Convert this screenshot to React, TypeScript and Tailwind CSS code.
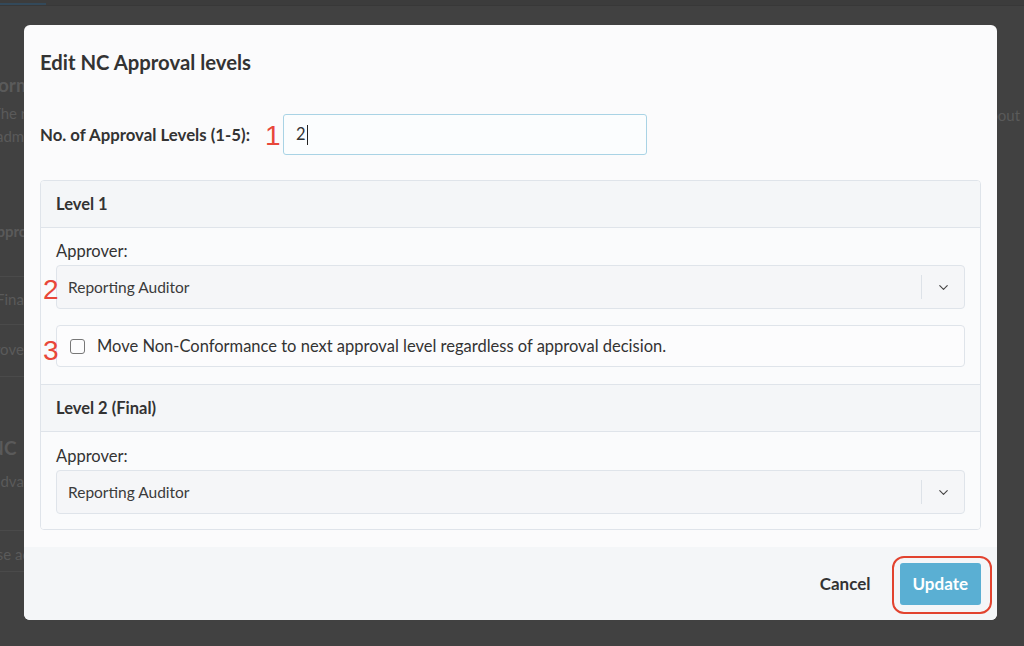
import { ChevronDown } from "lucide-react"

function ApproverSelect({ value }: { value: string }) {
  return (
    <div className="flex h-[44px] items-center rounded-[4px] border border-[#dfe4ea] bg-[#f5f6f8]">
      <span className="flex-1 pl-[11px] pt-[2px] text-[15.5px] text-[#3b3b3b]">{value}</span>
      <span className="h-[24px] w-px bg-[#dde2e8]" />
      <span className="flex w-[42px] justify-center text-[#444]">
        <ChevronDown className="h-[15px] w-[15px]" strokeWidth={1.8} />
      </span>
    </div>
  )
}

function Mark({ n, className = "" }: { n: string; className?: string }) {
  return (
    <span
      className={`font-['Liberation_Sans',sans-serif] text-[28px] leading-none text-[#e8473a] ${className}`}
    >
      {n}
    </span>
  )
}

export default function App() {
  return (
    <div className="relative min-h-screen overflow-hidden bg-[#414141] font-['Lato',sans-serif] text-[#5a5a5a]">
      {/* Page behind the dialog */}
      <div className="relative h-[6px] border-b border-[#383838] bg-[#3c3c3c]">
        <div className="absolute bottom-0 left-0 h-[2px] w-[46px] bg-[#33495a]" />
      </div>
      <div className="flex">
        <div className="w-[300px]">
          <div className="ml-[-12px] mt-[66px] text-[19px] font-bold leading-[26px]">Form</div>
          <div className="ml-[-8px] mt-[4px] text-[15px] leading-[23px]">The r</div>
          <div className="ml-[-4px] text-[15px] leading-[23px]">admin</div>
          <div className="ml-[-14px] mt-[72px] text-[15px] font-bold leading-[22px]">Approval</div>
          <div className="mt-[34px] border-t border-[#4a4a4a]" />
          <div className="ml-[-4px] mt-[11px] text-[15px] leading-[22px]">Final</div>
          <div className="mt-[14px] border-t border-[#4a4a4a]" />
          <div className="ml-[-32px] mt-[13px] text-[15px] leading-[22px]">Approver; Re</div>
          <div className="mt-[16px] border-t border-[#4a4a4a]" />
          <div className="ml-[-56px] mt-[58px] text-[19px] font-bold leading-[26px]">Final NC</div>
          <div className="ml-[-7px] mt-[9px] text-[15px] leading-[22px]">advanced</div>
          <div className="mt-[38px] border-t border-[#4a4a4a]" />
          <div className="ml-[-14px] mt-[12px] text-[15px] leading-[22px]">Use ad</div>
          <div className="mt-[6px] border-t border-[#4a4a4a]" />
        </div>
        <div className="flex-1">
          <div className="ml-[682px] mt-[98px] text-[15px] leading-[23px]">about c</div>
        </div>
      </div>

      {/* Dialog */}
      <div className="absolute inset-0 pl-[24px] pt-[25px]">
        <div className="w-[973px] overflow-hidden rounded-[6px] bg-[#fbfbfc] text-[#333]">
          <div className="px-[16px] pb-[17px]">
            <h2 className="pt-[24px] text-[20.3px] font-bold leading-[26px] text-[#333]">Edit NC Approval levels</h2>

            <div className="mt-[39px] flex items-center">
              <label className="w-[210px] whitespace-nowrap text-[16.8px] font-bold text-[#333]">
                No. of Approval Levels (1-5):
              </label>
              <Mark n="1" className="ml-[15px] w-[18px] pt-[2px]" />
              <div className="flex h-[41px] w-[364px] items-center rounded-[3px] border border-[#a9d3e5] bg-[#fbfdfe] pl-[12px] text-[16.5px] text-[#333]">
                2<span className="ml-px h-[20px] w-px bg-[#222]" />
              </div>
            </div>

            <div className="mt-[25px] overflow-hidden rounded-[4px] border border-[#dfe4ea]">
              <div className="flex h-[47px] items-center border-b border-[#dfe4ea] bg-[#f4f6f8] px-[15px] text-[16.5px] font-bold text-[#333]">
                Level 1
              </div>
              <div className="relative border-b border-[#dfe4ea] bg-[#fafbfc] px-[15px] pb-[17px] pt-[13px]">
                <div className="mb-[4px] text-[16.5px] leading-[20px] text-[#333]">Approver:</div>
                <ApproverSelect value="Reporting Auditor" />
                <div className="mt-[16px] flex h-[42px] items-center rounded-[4px] border border-[#dfe4ea] bg-[#fcfcfd] pl-[13px]">
                  <span className="h-[15px] w-[15px] rounded-[3px] border-[1.5px] border-[#777]" />
                  <span className="ml-[12px] text-[16.5px] text-[#333]">
                    Move Non-Conformance to next approval level regardless of approval decision.
                  </span>
                </div>
                <Mark n="2" className="absolute left-[2px] top-[48px]" />
                <Mark n="3" className="absolute left-[2px] top-[109px]" />
              </div>
              <div className="flex h-[47px] items-center border-b border-[#dfe4ea] bg-[#f4f6f8] px-[15px] text-[16.5px] font-bold text-[#333]">
                Level 2 (Final)
              </div>
              <div className="bg-[#fafbfc] px-[15px] pb-[15px] pt-[14px]">
                <div className="mb-[4px] text-[16.5px] leading-[20px] text-[#333]">Approver:</div>
                <ApproverSelect value="Reporting Auditor" />
              </div>
            </div>
          </div>

          <div className="flex h-[73px] items-center justify-end bg-[#f4f6f8] pr-[16px]">
            <button className="text-[17px] font-bold text-[#333]">Cancel</button>
            <div className="relative ml-[29px]">
              <button className="h-[42px] rounded-[3px] bg-[#5aafd3] px-[13px] text-[17px] font-bold text-white">
                Update
              </button>
              <span className="pointer-events-none absolute bottom-[-9px] left-[-8px] right-[-11px] top-[-7px] rounded-[12px] border-2 border-[#e2432f]" />
            </div>
          </div>
        </div>
      </div>
    </div>
  )
}
